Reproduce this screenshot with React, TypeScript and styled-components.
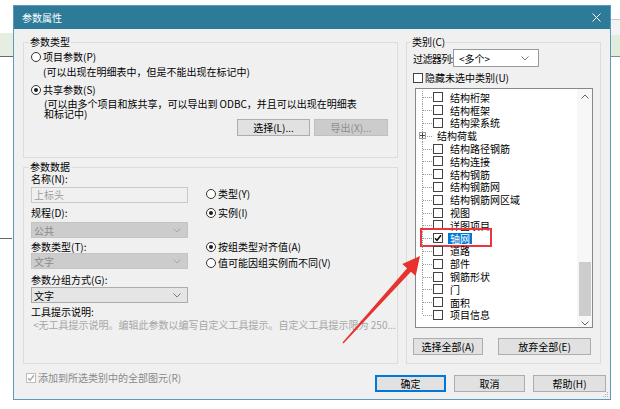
import React from 'react';
import styled, { createGlobalStyle } from 'styled-components';

const GlobalStyle = createGlobalStyle`
  html, body {
    margin: 0;
    padding: 0;
    background: #fff;
  }
  body {
    font-family: "Noto Sans CJK SC", "Noto Sans", sans-serif;
    font-size: 10px;
    color: #000;
  }
`;

const Desktop = styled.div`
  position: relative;
  width: 620px;
  height: 409px;
  overflow: hidden;
  background: #fff;
`;

// bits of the app window behind the dialog
const BehindLeft = styled.div`
  position: absolute;
  left: 0;
  top: 0;
  width: 13px;
  height: 409px;
  background:
    linear-gradient(#666, #666) 0 238px / 12px 1px no-repeat,
    linear-gradient(#fff 0 33px, #e6eee2 33px 56px, #6a6a6a 56px 57px, #fff 57px);
`;

const BehindRight = styled.div`
  position: absolute;
  right: 0;
  top: 0;
  width: 9px;
  height: 409px;
  background: linear-gradient(
    #fff 0 19px,
    #c8c8c8 19px 20px,
    #f3f3f3 20px 35px,
    #e2ecdb 35px 56px,
    #8a8a8a 56px 57px,
    #fff 57px
  );
`;

const Dialog = styled.div`
  position: absolute;
  left: 13px;
  top: 5px;
  width: 598px;
  height: 395px;
  box-sizing: border-box;
  border: 1px solid #5a9bbb;
  background: #f0f0f0;
  display: flex;
  flex-direction: column;
`;

const TitleBar = styled.div`
  height: 23px;
  flex: none;
  background: #2d7b99;
  color: #fff;
  display: flex;
  align-items: center;
  justify-content: space-between;
  padding: 0 9px 0 8px;
  font-size: 10px;
`;

const Body = styled.div`
  height: 335px;
  box-sizing: border-box;
  padding: 7px 9px 0 9px;
  display: grid;
  grid-template-columns: 375px 195px;
  column-gap: 8px;
`;

const LeftColumn = styled.div`
  display: flex;
  flex-direction: column;
  gap: 3px;
`;

const Group = styled.fieldset<{ $h: number; $pl: number; $pr: number; $pb: number }>`
  margin: 0;
  min-width: 0;
  box-sizing: border-box;
  height: ${(p) => p.$h}px;
  padding: 0 ${(p) => p.$pr}px ${(p) => p.$pb}px ${(p) => p.$pl}px;
  border: 1px solid #dcdcdc;
  display: flex;
  flex-direction: column;
`;

const Legend = styled.legend`
  padding: 0 1px;
  margin-left: -2px;
  line-height: 12px;
  font-size: 10px;
`;

const OptionRow = styled.label<{ $mt?: number }>`
  display: flex;
  align-items: center;
  gap: 2px;
  height: 12px;
  line-height: 12px;
  margin-top: ${(p) => p.$mt || 0}px;
  white-space: nowrap;
`;

const RadioMark = styled.span<{ $checked?: boolean }>`
  width: 10px;
  height: 10px;
  box-sizing: border-box;
  border: 1px solid #333;
  border-radius: 50%;
  background: #fff;
  display: inline-flex;
  align-items: center;
  justify-content: center;
  flex: none;

  &::after {
    content: '';
    width: 4px;
    height: 4px;
    border-radius: 50%;
    background: #1a1a1a;
    display: ${(p) => (p.$checked ? 'block' : 'none')};
  }
`;

const CheckMark = styled.span<{ $disabled?: boolean }>`
  width: 10px;
  height: 10px;
  box-sizing: border-box;
  border: 1px solid ${(p) => (p.$disabled ? '#bdbdbd' : '#444')};
  background: #fff;
  display: inline-flex;
  align-items: center;
  justify-content: center;
  flex: none;
`;

const Hint = styled.div<{ $mt: number; $ml: number; $lh: number }>`
  margin-top: ${(p) => p.$mt}px;
  margin-left: ${(p) => p.$ml}px;
  line-height: ${(p) => p.$lh}px;
  white-space: nowrap;
`;

const ButtonRow = styled.div<{ $mt?: string; $gap: number }>`
  display: flex;
  justify-content: ${(p) => (p.$mt === 'auto' ? 'flex-end' : 'flex-start')};
  gap: ${(p) => p.$gap}px;
  margin-top: ${(p) => p.$mt || 0};
`;

const Button = styled.button<{ $w: number; $primary?: boolean }>`
  width: ${(p) => p.$w}px;
  height: 17px;
  box-sizing: border-box;
  padding: 0;
  font-family: inherit;
  font-size: 10px;
  line-height: 15px;
  color: #000;
  background: #e1e1e1;
  border: 1px solid ${(p) => (p.$primary ? '#0078d7' : '#adadad')};
  box-shadow: ${(p) => (p.$primary ? 'inset 0 0 0 1px #0078d7' : 'none')};

  &:disabled {
    color: #8d8d8d;
    background: #cccccc;
    border-color: #bfbfbf;
  }
`;

const DataGrid = styled.div`
  display: grid;
  grid-template-columns: 157px 1fr;
  grid-template-rows: 12px 18px 16px 19px 15px 16px 17px 17px 15px 13px;
  column-gap: 18px;
  align-items: end;
`;

const FieldLabel = styled.div<{ $row: number }>`
  grid-column: 1;
  grid-row: ${(p) => p.$row};
  line-height: 12px;
  white-space: nowrap;
`;

const SideOption = styled(OptionRow)<{ $row: number; $center?: boolean }>`
  grid-column: 2;
  grid-row: ${(p) => p.$row};
  align-self: ${(p) => (p.$center ? 'center' : 'end')};
`;

const TextInput = styled.div<{ $row: number }>`
  grid-column: 1;
  grid-row: ${(p) => p.$row};
  height: 16px;
  box-sizing: border-box;
  border: 1px solid #cacaca;
  background: #f0f0f0;
  color: #9d9d9d;
  line-height: 14px;
  padding-left: 2px;
`;

const Combo = styled.div<{
  $variant: 'disabled' | 'normal' | 'white';
  $row?: number;
  $w: number;
  $h: number;
  $pl: number;
  $pr: number;
}>`
  grid-column: 1;
  grid-row: ${(p) => p.$row || 'auto'};
  width: ${(p) => p.$w}px;
  height: ${(p) => p.$h}px;
  box-sizing: border-box;
  display: flex;
  align-items: center;
  justify-content: space-between;
  padding: 0 ${(p) => p.$pr}px 0 ${(p) => p.$pl}px;
  flex: none;
  border: 1px solid
    ${(p) => (p.$variant === 'disabled' ? '#c4c4c4' : p.$variant === 'white' ? '#9a9a9a' : '#acacac')};
  background: ${(p) => (p.$variant === 'disabled' ? '#cccccc' : p.$variant === 'white' ? '#fff' : '#e5e5e5')};
  color: ${(p) => (p.$variant === 'disabled' ? '#8a8a8a' : '#000')};
`;

const Tooltip = styled.div`
  grid-column: 1 / -1;
  grid-row: 10;
  line-height: 12px;
  color: #a6a6a6;
  white-space: nowrap;
  margin-left: 2px;
`;

const FilterRow = styled.div`
  display: flex;
  align-items: center;
  margin-top: 1px;
  height: 18px;
`;

const FilterLabel = styled.span`
  width: 40px;
  letter-spacing: -0.6px;
  white-space: nowrap;
  flex: none;
`;

const TreeBox = styled.div`
  margin: 4px 0 0 2px;
  width: 178px;
  height: 240px;
  box-sizing: border-box;
  border: 1px solid #828790;
  background: #fff;
  display: flex;
`;

const TreeList = styled.div`
  flex: 1;
  padding-top: 2px;
  overflow: hidden;
`;

const TreeRow = styled.div<{ $last?: boolean; $branch?: boolean }>`
  position: relative;
  height: 12.8px;
  display: flex;
  align-items: center;
  padding-left: ${(p) => (p.$branch ? 3 : 17)}px;
  white-space: nowrap;

  &::before {
    content: '';
    position: absolute;
    left: 6px;
    top: 0;
    width: 1px;
    height: ${(p) => (p.$last ? '50%' : '100%')};
    background-image: linear-gradient(#9a9a9a 50%, transparent 50%);
    background-size: 1px 2px;
  }

  &::after {
    content: '';
    position: absolute;
    left: 7px;
    top: 50%;
    width: 10px;
    height: 1px;
    background-image: linear-gradient(to right, #9a9a9a 50%, transparent 50%);
    background-size: 2px 1px;
  }
`;

const Expander = styled.span`
  position: relative;
  z-index: 1;
  width: 7px;
  height: 7px;
  box-sizing: border-box;
  border: 1px solid #a0a0a0;
  background: #fff;
  display: inline-flex;
  align-items: center;
  justify-content: center;
  flex: none;
`;

const TreeText = styled.span<{ $selected?: boolean; $ml: number }>`
  margin-left: ${(p) => p.$ml}px;
  padding: 0 2px;
  line-height: 11px;
  background: ${(p) => (p.$selected ? '#0078d7' : 'transparent')};
  color: ${(p) => (p.$selected ? '#fff' : '#000')};
`;

// annotation drawn on top of the screenshot
const RedFrame = styled.span`
  position: absolute;
  left: 4px;
  top: -4px;
  width: 72px;
  height: 19px;
  box-sizing: border-box;
  border: 2px solid #e8383d;
`;

const ScrollBar = styled.div`
  width: 15px;
  flex: none;
  background: #f7f7f7;
  display: flex;
  flex-direction: column;
  align-items: center;
`;

const ScrollArrow = styled.div`
  height: 15px;
  width: 15px;
  display: flex;
  align-items: center;
  justify-content: center;
  flex: none;
`;

const ScrollTrack = styled.div`
  flex: 1;
  width: 100%;
`;

const Thumb = styled.div<{ $top: number; $h: number }>`
  margin: ${(p) => p.$top}px 1px 0 2px;
  height: ${(p) => p.$h}px;
  background: #cdcdcd;
`;

const Footer = styled.div`
  flex: 1;
  display: flex;
  justify-content: space-between;
  align-items: flex-start;
  padding: 0 4px 0 12px;
  position: relative;
`;

const DisabledOption = styled(OptionRow)`
  color: #8a8a8a;
`;

const FooterButtons = styled.div`
  display: flex;
  gap: 8px;
  margin-top: 11px;
`;

const Grip = styled.svg`
  position: absolute;
  right: 1px;
  bottom: 1px;
`;

const Arrow = styled.svg`
  position: absolute;
  left: 0;
  top: 0;
  pointer-events: none;
`;

const Chevron = ({ color = '#7a7a7a', up = false }: { color?: string; up?: boolean }) => (
  <svg width="8" height="5" viewBox="0 0 8 5">
    <polyline
      points={up ? '0.5,4.5 4,1 7.5,4.5' : '0.5,0.5 4,4 7.5,0.5'}
      fill="none"
      stroke={color}
      strokeWidth="1"
    />
  </svg>
);

const Tick = ({ color = '#111' }: { color?: string }) => (
  <svg width="8" height="8" viewBox="0 0 8 8">
    <path d="M1 4.2 L3 6.3 L7 1.3" fill="none" stroke={color} strokeWidth="1.6" />
  </svg>
);

type TreeItem = { label: string; branch?: boolean; checked?: boolean };

const TREE: TreeItem[] = [
  { label: '结构桁架' },
  { label: '结构框架' },
  { label: '结构梁系统' },
  { label: '结构荷载', branch: true },
  { label: '结构路径钢筋' },
  { label: '结构连接' },
  { label: '结构钢筋' },
  { label: '结构钢筋网' },
  { label: '结构钢筋网区域' },
  { label: '视图' },
  { label: '详图项目' },
  { label: '轴网', checked: true },
  { label: '道路' },
  { label: '部件' },
  { label: '钢筋形状' },
  { label: '门' },
  { label: '面积' },
  { label: '项目信息' },
];

const App = () => {
  return (
    <Desktop>
      <GlobalStyle />
      <BehindLeft />
      <BehindRight />

      <Dialog>
        <TitleBar>
          <span>参数属性</span>
          <svg width="9" height="9" viewBox="0 0 9 9">
            <path d="M0.5 0.5 L8.5 8.5 M8.5 0.5 L0.5 8.5" stroke="#fff" strokeWidth="1" />
          </svg>
        </TitleBar>

        <Body>
          <LeftColumn>
            <Group $h={122} $pl={7} $pr={9} $pb={6}>
              <Legend>参数类型</Legend>
              <OptionRow $mt={3}>
                <RadioMark />
                项目参数(P)
              </OptionRow>
              <Hint $mt={3} $ml={12} $lh={12}>
                (可以出现在明细表中，但是不能出现在标记中)
              </Hint>
              <OptionRow $mt={6}>
                <RadioMark $checked />
                共享参数(S)
              </OptionRow>
              <Hint $mt={3} $ml={13} $lh={10}>
                (可以由多个项目和族共享，可以导出到 ODBC，并且可以出现在明细表
                <br />
                和标记中)
              </Hint>
              <ButtonRow $mt="auto" $gap={4}>
                <Button $w={73}>选择(L)...</Button>
                <Button $w={74} disabled>
                  导出(X)...
                </Button>
              </ButtonRow>
            </Group>

            <Group $h={203} $pl={7} $pr={9} $pb={6}>
              <Legend>参数数据</Legend>
              <DataGrid>
                <FieldLabel $row={1}>名称(N):</FieldLabel>
                <TextInput $row={2}>上标头</TextInput>
                <SideOption $row={2} $center>
                  <RadioMark />
                  类型(Y)
                </SideOption>

                <FieldLabel $row={3}>规程(D):</FieldLabel>
                <SideOption $row={3}>
                  <RadioMark $checked />
                  实例(I)
                </SideOption>
                <Combo $row={4} $variant="disabled" $w={157} $h={16} $pl={2} $pr={6}>
                  公共
                  <Chevron color="#a8a8a8" />
                </Combo>

                <FieldLabel $row={5}>参数类型(T):</FieldLabel>
                <SideOption $row={5}>
                  <RadioMark $checked />
                  按组类型对齐值(A)
                </SideOption>
                <Combo $row={6} $variant="disabled" $w={157} $h={16} $pl={2} $pr={6}>
                  文字
                  <Chevron color="#a8a8a8" />
                </Combo>
                <SideOption $row={6}>
                  <RadioMark />
                  值可能因组实例而不同(V)
                </SideOption>

                <FieldLabel $row={7}>参数分组方式(G):</FieldLabel>
                <Combo $row={8} $variant="normal" $w={157} $h={16} $pl={2} $pr={6}>
                  文字
                  <Chevron />
                </Combo>

                <FieldLabel $row={9}>工具提示说明:</FieldLabel>
                <Tooltip>
                  &lt;无工具提示说明。编辑此参数以编写自定义工具提示。自定义工具提示限为 250...
                </Tooltip>
              </DataGrid>
            </Group>
          </LeftColumn>

          <Group $h={328} $pl={6} $pr={7} $pb={8}>
            <Legend>类别(C)</Legend>
            <FilterRow>
              <FilterLabel>过滤器列:</FilterLabel>
              <Combo $variant="white" $w={86} $h={18} $pl={5} $pr={9}>
                &lt;多个&gt;
                <Chevron />
              </Combo>
            </FilterRow>
            <OptionRow $mt={5}>
              <CheckMark />
              隐藏未选中类别(U)
            </OptionRow>

            <TreeBox>
              <TreeList>
                {TREE.map((item, i) => (
                  <TreeRow key={item.label} $branch={item.branch} $last={i === TREE.length - 1}>
                    {item.branch ? (
                      <>
                        <Expander>
                          <svg width="5" height="5" viewBox="0 0 5 5">
                            <path d="M0 2.5 H5 M2.5 0 V5" stroke="#444" strokeWidth="1" />
                          </svg>
                        </Expander>
                        <TreeText $ml={9}>{item.label}</TreeText>
                      </>
                    ) : (
                      <>
                        <CheckMark>{item.checked && <Tick />}</CheckMark>
                        <TreeText $ml={5} $selected={item.checked}>
                          {item.label}
                        </TreeText>
                      </>
                    )}
                    {item.checked && <RedFrame />}
                  </TreeRow>
                ))}
              </TreeList>
              <ScrollBar>
                <ScrollArrow>
                  <Chevron color="#606060" up />
                </ScrollArrow>
                <ScrollTrack>
                  <Thumb $top={158} $h={54} />
                </ScrollTrack>
                <ScrollArrow>
                  <Chevron color="#606060" />
                </ScrollArrow>
              </ScrollBar>
            </TreeBox>

            <ButtonRow $mt="10px" $gap={15}>
              <Button $w={70}>选择全部(A)</Button>
              <Button $w={93}>放弃全部(E)</Button>
            </ButtonRow>
          </Group>
        </Body>

        <Footer>
          <DisabledOption $mt={8}>
            <CheckMark $disabled>
              <Tick color="#b0b0b0" />
            </CheckMark>
            添加到所选类别中的全部图元(R)
          </DisabledOption>
          <FooterButtons>
            <Button $w={71} $primary>
              确定
            </Button>
            <Button $w={71}>取消</Button>
            <Button $w={73}>帮助(H)</Button>
          </FooterButtons>
          <Grip width="6" height="6" viewBox="0 0 6 6">
            <rect x="4" y="0" width="1" height="1" fill="#b5b5b5" />
            <rect x="2" y="2" width="1" height="1" fill="#b5b5b5" />
            <rect x="4" y="2" width="1" height="1" fill="#b5b5b5" />
            <rect x="0" y="4" width="1" height="1" fill="#b5b5b5" />
            <rect x="2" y="4" width="1" height="1" fill="#b5b5b5" />
            <rect x="4" y="4" width="1" height="1" fill="#b5b5b5" />
          </Grip>
        </Footer>
      </Dialog>

      <Arrow width="620" height="409" viewBox="0 0 620 409">
        <polygon
          points="342.5,342.6 407.1,268.3 402.3,264 420,256 415.7,276 410.9,271.7 343.5,343.4"
          fill="#e8322e"
        />
      </Arrow>
    </Desktop>
  );
};

export default App;
